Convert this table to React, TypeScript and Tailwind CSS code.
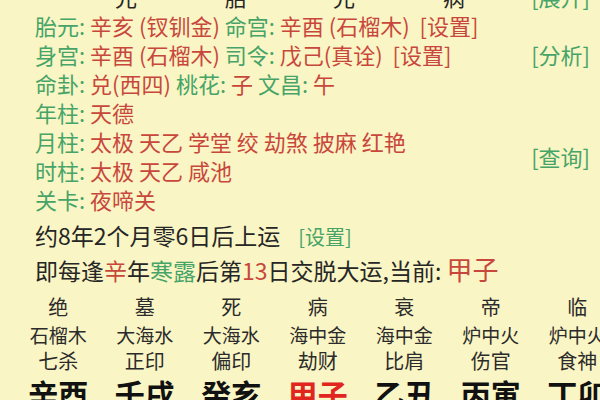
import React from "react";

const G = "text-[#46a468]";
const R = "text-[#c8473c]";

const stages = ["绝", "墓", "死", "病", "衰", "帝", "临"];
const nayin = ["石榴木", "大海水", "大海水", "海中金", "海中金", "炉中火", "炉中火"];
const shishen = ["七杀", "正印", "偏印", "劫财", "比肩", "伤官", "食神"];
const pillars = ["辛酉", "壬戌", "癸亥", "甲子", "乙丑", "丙寅", "丁卯"];

function Label({ children }: { children: React.ReactNode }) {
  return <span className={G}>{children}: </span>;
}

export default function App() {
  return (
    <div
      className="w-[600px] h-[400px] overflow-hidden bg-[#faf5c4] text-[#262626]"
      style={{ fontFamily: '"Noto Sans CJK SC", "Noto Sans", sans-serif' }}
    >
      <div className="mt-[-18px] pl-[35px] pr-[10px] text-[22px] leading-[29px] whitespace-pre">
        {/* row cut off by the top edge */}
        <div className="flex justify-between">
          <div className="flex">
            <span className="ml-[80px] w-[110px]">兄</span>
            <span className="w-[108px]">胎</span>
            <span className="w-[110px]">兄</span>
            <span>病</span>
          </div>
          <span className={G}>[展开]</span>
        </div>

        <div>
          <Label>胎元</Label>
          <span className={R}>辛亥 (钗钏金) </span>
          <Label>命宫</Label>
          <span className={R}>辛酉 (石榴木)  [设置]</span>
        </div>

        <div className="flex justify-between">
          <div>
            <Label>身宫</Label>
            <span className={R}>辛酉 (石榴木) </span>
            <Label>司令</Label>
            <span className={R}>戊己(真诠)  [设置]</span>
          </div>
          <span className={G}>[分析]</span>
        </div>

        <div>
          <Label>命卦</Label>
          <span className={R}>兑(西四) </span>
          <Label>桃花</Label>
          <span className={R}>子 </span>
          <Label>文昌</Label>
          <span className={R}>午</span>
        </div>

        <div className="flex items-center justify-between">
          <div>
            <div>
              <Label>年柱</Label>
              <span className={R}>天德</span>
            </div>
            <div>
              <Label>月柱</Label>
              <span className={R}>太极 天乙 学堂 绞 劫煞 披麻 红艳</span>
            </div>
            <div>
              <Label>时柱</Label>
              <span className={R}>太极 天乙 咸池</span>
            </div>
            <div>
              <Label>关卡</Label>
              <span className={R}>夜啼关</span>
            </div>
          </div>
          <span className={G}>[查询]</span>
        </div>

        <div className="mt-[5px] text-[23px] leading-[32px]">
          约8年2个月零6日后上运<span className={`${G} ml-[18px] text-[20px]`}>[设置]</span>
        </div>
        <div className="text-[23px] leading-[32px]">
          即每逢<span className={R}>辛</span>年<span className={G}>寒露</span>后第
          <span className={R}>13</span>日交脱大运,当前: <span className={`${R} text-[26px]`}>甲子</span>
        </div>
      </div>

      <div className="mt-[7px] ml-[15px] grid grid-cols-[repeat(7,86.5px)] text-center text-[#2b2b2b]">
        {stages.map((s) => (
          <div key={s} className="h-[28px] text-[20px] leading-[28px]">{s}</div>
        ))}
        {nayin.map((s, i) => (
          <div key={i} className="h-[27px] text-[19px] leading-[27px]">{s}</div>
        ))}
        {shishen.map((s) => (
          <div key={s} className="h-[25px] text-[20px] leading-[25px]">{s}</div>
        ))}
        {pillars.map((s) => (
          <div
            key={s}
            className={`h-[40px] text-[30px] leading-[40px] font-bold ${s === "甲子" ? "text-[#e0261e]" : "text-[#111]"}`}
          >
            {s}
          </div>
        ))}
      </div>
    </div>
  );
}
